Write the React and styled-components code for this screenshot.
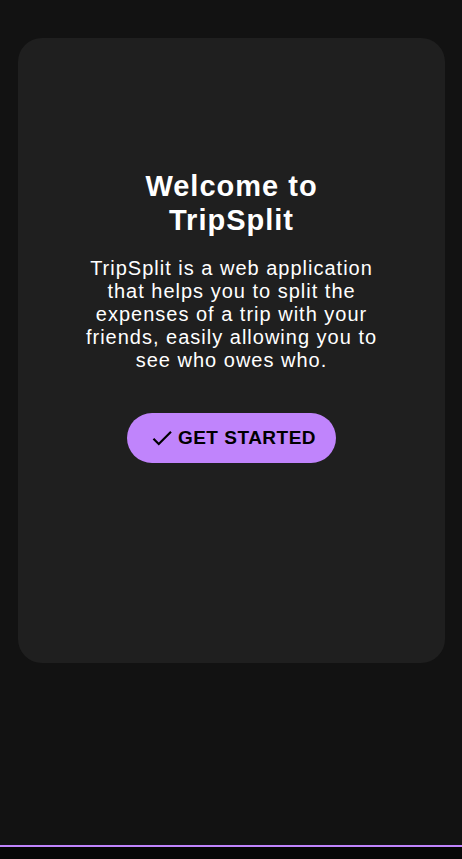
import styled, { createGlobalStyle } from "styled-components";
import React from "react";

const GlobalStyle = createGlobalStyle`
  html, body {
    margin: 0;
    padding: 0;
    background-color: #121212;
    font-family: "Liberation Sans", Arial, sans-serif;
  }
`;

const CheckIcon = () => (
  <svg width="26" height="26" viewBox="0 0 24 24" fill="currentColor">
    <path d="M9 16.17 4.83 12l-1.42 1.41L9 19 21 7l-1.41-1.41z" />
  </svg>
);

const App = () => {
  return (
    <Page>
      <GlobalStyle />
      <Main>
        <Card>
          <Title>Welcome to TripSplit</Title>
          <Description>
            TripSplit is a web application that helps you to split the
            expenses of a trip with your friends, easily allowing you to see
            who owes who.
          </Description>
          <StartButton>
            <CheckIcon />
            <span>GET STARTED</span>
          </StartButton>
        </Card>
      </Main>
      <BottomBar />
    </Page>
  );
};
export default App;

const Page = styled.div`
  min-height: 100vh;
  display: flex;
  flex-direction: column;
  background-color: #121212;
`;

const Main = styled.main`
  flex: 1;
  padding: 38px 17px 0 18px;
`;

const Card = styled.section`
  height: 625px;
  box-sizing: border-box;
  background-color: #1f1f1f;
  border-radius: 24px;
  padding: 132px 20px 0;
  display: flex;
  flex-direction: column;
  align-items: center;
  color: #ffffff;
`;

const Title = styled.h1`
  margin: 0;
  max-width: 240px;
  font-size: 29px;
  font-weight: bold;
  letter-spacing: 1px;
  line-height: 33.5px;
  text-align: center;
`;

const Description = styled.p`
  margin: 20px 0 0;
  max-width: 300px;
  font-size: 20px;
  letter-spacing: 1px;
  line-height: 23px;
  text-align: center;
`;

const StartButton = styled.button`
  margin-top: 41px;
  width: 209px;
  height: 50px;
  border: none;
  border-radius: 25px;
  background-color: #c084fc;
  color: #000000;
  display: flex;
  align-items: center;
  justify-content: center;
  gap: 3px;
  padding: 0 0 0 2px;
  font-family: "Liberation Sans", Arial, sans-serif;
  font-size: 19px;
  font-weight: bold;
  letter-spacing: 0.5px;
  cursor: pointer;
`;

const BottomBar = styled.footer`
  height: 12px;
  border-top: 2px solid #c084fc;
  background-color: #070707;
`;
